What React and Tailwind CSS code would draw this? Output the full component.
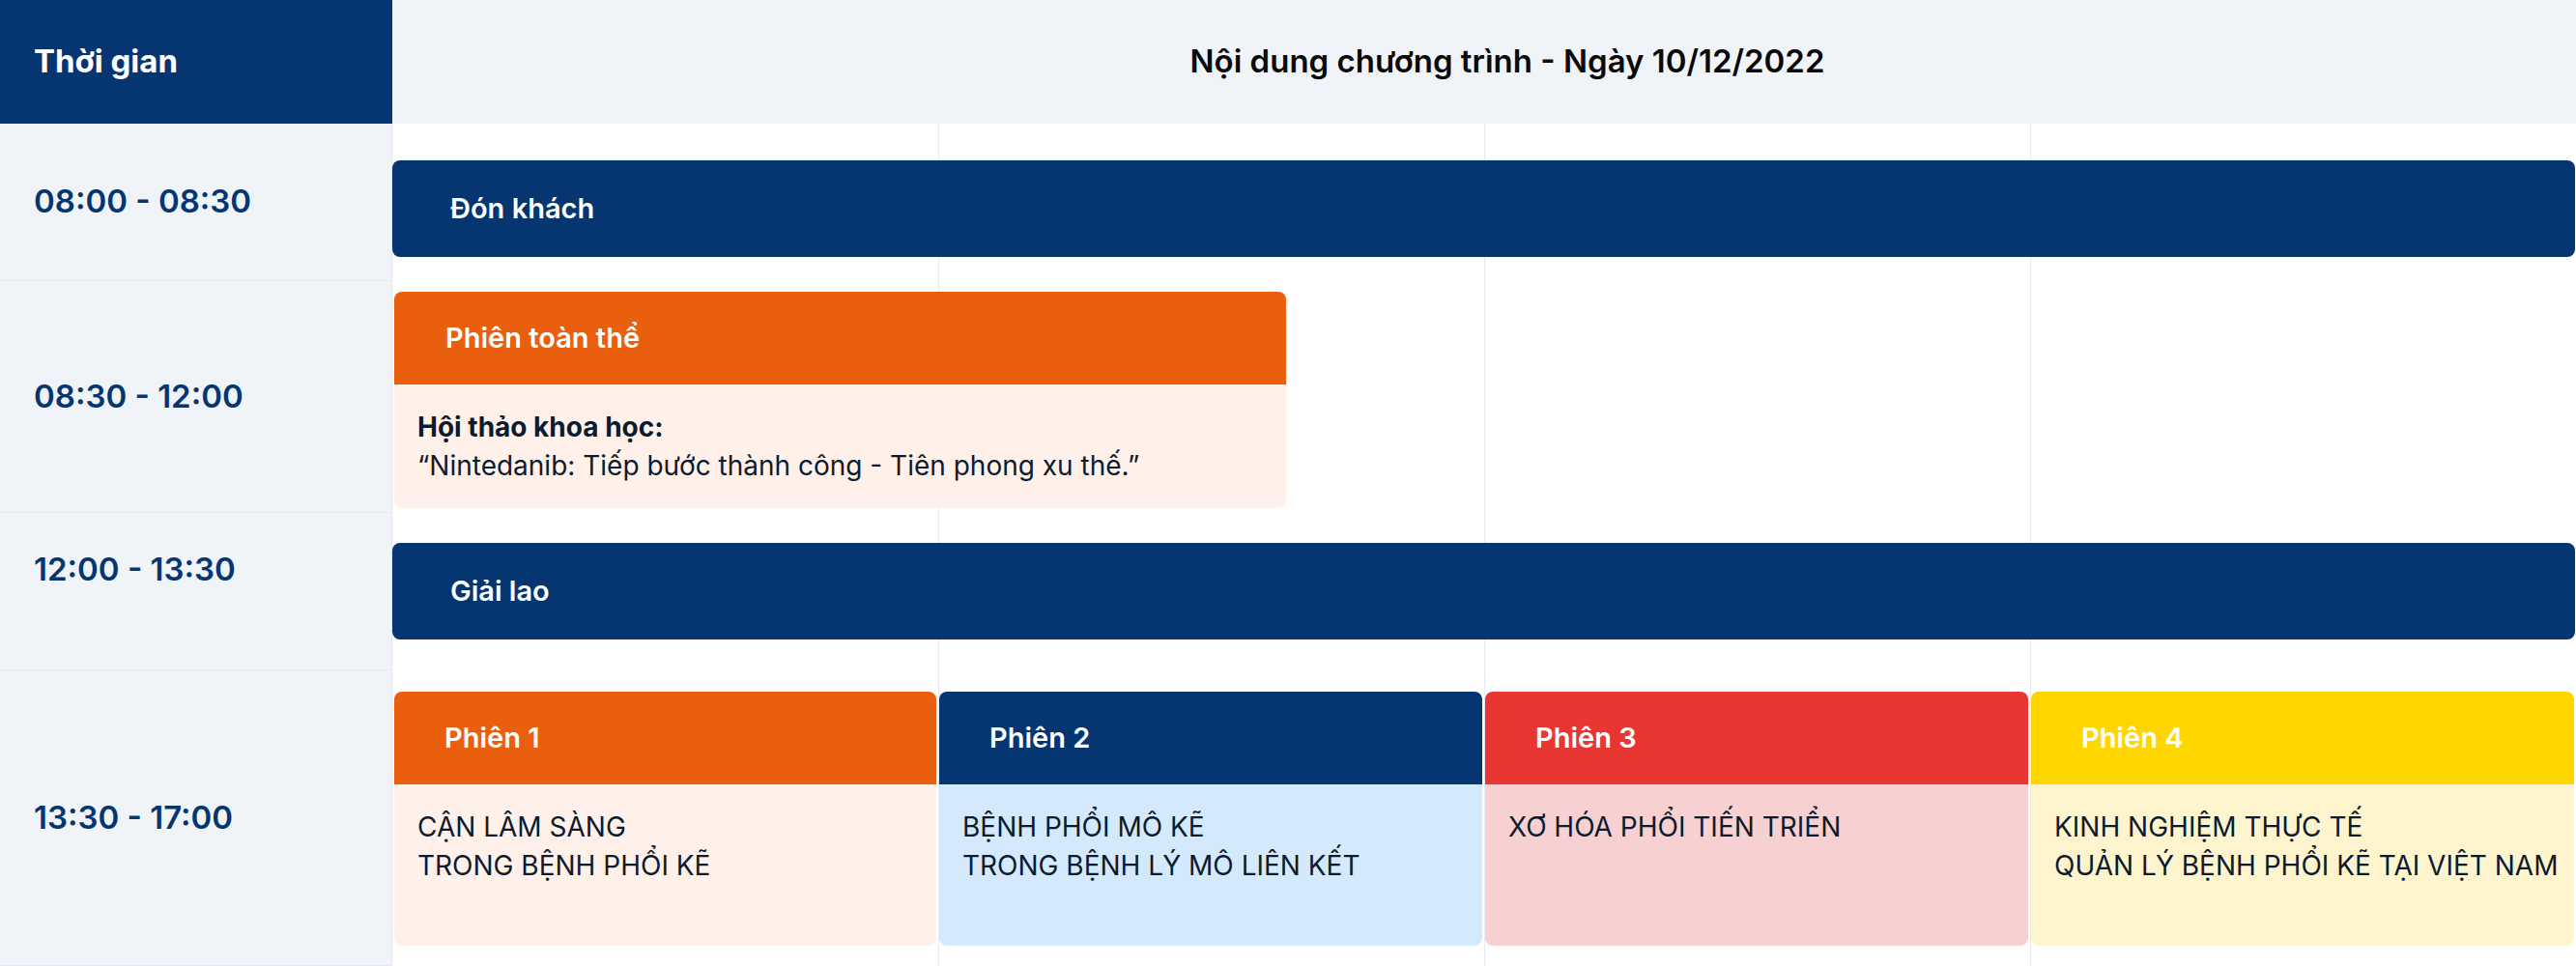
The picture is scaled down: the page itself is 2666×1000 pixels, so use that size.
const sessions = [
  {
    title: 'Phiên 1',
    head: 'bg-[#e95f0e]',
    body: 'bg-[#fff1e9]',
    lines: ['CẬN LÂM SÀNG', 'TRONG BỆNH PHỔI KẼ'],
    col: 'col-start-2 ml-[2px] mr-[2px]',
  },
  {
    title: 'Phiên 2',
    head: 'bg-[#053672]',
    body: 'bg-[#d4eafc]',
    lines: ['BỆNH PHỔI MÔ KẼ', 'TRONG BỆNH LÝ MÔ LIÊN KẾT'],
    col: 'col-start-3 ml-px mr-[2px]',
  },
  {
    title: 'Phiên 3',
    head: 'bg-[#e83733]',
    body: 'bg-[#f7d0d1]',
    lines: ['XƠ HÓA PHỔI TIẾN TRIỂN'],
    col: 'col-start-4 ml-px mr-[2px]',
  },
  {
    title: 'Phiên 4',
    head: 'bg-[#ffd600]',
    body: 'bg-[#fef5cf]',
    lines: ['KINH NGHIỆM THỰC TẾ', 'QUẢN LÝ BỆNH PHỔI KẼ TẠI VIỆT NAM'],
    col: 'col-start-5 ml-px mr-[2px]',
  },
];

function TimeCell({ row, label, extra = '' }) {
  return (
    <div
      className={`${row} col-start-1 bg-[#f0f4f8] border-r border-b border-[#e3e8ee] flex items-center pl-[35px] text-[33px] font-semibold text-[#053672] ${extra}`}
    >
      {label}
    </div>
  );
}

function Bar({ row, label, extra = '' }) {
  return (
    <div
      className={`${row} col-start-2 col-span-4 self-start h-[100px] mr-px bg-[#053672] rounded-lg flex items-center pl-[60px] text-[29px] font-semibold text-white ${extra}`}
    >
      {label}
    </div>
  );
}

export default function App() {
  return (
    <div className="w-[2666px] h-[1000px] bg-white font-['Inter',sans-serif] grid grid-cols-[406px_repeat(4,1fr)] grid-rows-[128px_163px_240px_163px_306px]">
      {/* header */}
      <div className="row-start-1 col-start-1 bg-[#053672] flex items-center pl-[35px] text-[33px] font-bold text-white">
        Thời gian
      </div>
      <div className="row-start-1 col-start-2 col-span-4 bg-[#f0f4f8] flex items-center justify-center pl-[48px] text-[33px] font-semibold text-[#0a0a0a]">
        Nội dung chương trình - Ngày 10/12/2022
      </div>

      {/* column guide lines */}
      <div className="row-start-2 row-span-4 col-start-2" />
      <div className="row-start-2 row-span-4 col-start-3 border-l border-[#e6e9ef]" />
      <div className="row-start-2 row-span-4 col-start-4 border-l border-[#e6e9ef]" />
      <div className="row-start-2 row-span-4 col-start-5 border-l border-[#e6e9ef]" />

      {/* time column */}
      <TimeCell row="row-start-2" label="08:00 - 08:30" />
      <TimeCell row="row-start-3" label="08:30 - 12:00" />
      <TimeCell row="row-start-4" label="12:00 - 13:30" extra="pb-[44px]" />
      <TimeCell row="row-start-5" label="13:30 - 17:00" />

      {/* events */}
      <Bar row="row-start-2" label="Đón khách" extra="mt-[38px]" />

      <div className="row-start-3 col-start-2 col-span-4 self-start justify-self-start mt-[11px] ml-[2px] w-[923px] rounded-lg overflow-hidden">
        <div className="h-[96px] bg-[#e95f0e] flex items-center pl-[53px] text-[29px] font-semibold text-white">
          Phiên toàn thể
        </div>
        <div className="bg-[#fff1e9] px-6 py-6 text-[28px] leading-[40px] text-[#0d1b2e]">
          <div className="font-bold">Hội thảo khoa học:</div>
          <div>“Nintedanib: Tiếp bước thành công - Tiên phong xu thế.”</div>
        </div>
      </div>

      <Bar row="row-start-4" label="Giải lao" extra="mt-[31px]" />

      {sessions.map((s) => (
        <div
          key={s.title}
          className={`row-start-5 ${s.col} self-start mt-[22px] rounded-lg overflow-hidden`}
        >
          <div className={`h-[96px] ${s.head} flex items-center pl-[52px] text-[29px] font-semibold text-white`}>
            {s.title}
          </div>
          <div className={`h-[167px] ${s.body} px-6 pt-6 text-[28px] leading-[40px] text-[#0d1b2e] whitespace-nowrap`}>
            {s.lines.map((l) => (
              <div key={l}>{l}</div>
            ))}
          </div>
        </div>
      ))}
    </div>
  );
}
